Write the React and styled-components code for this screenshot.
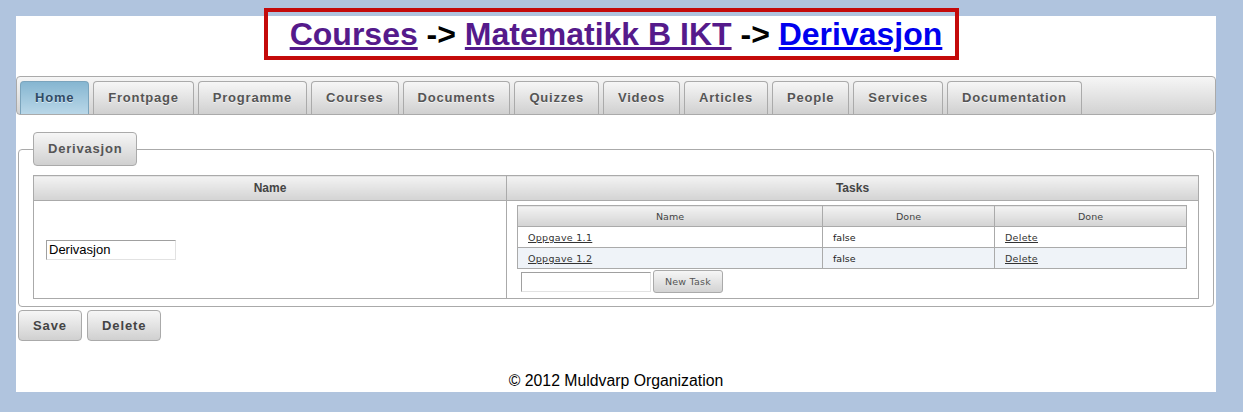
import React from 'react';
import styled, { createGlobalStyle } from 'styled-components';

const GlobalStyle = createGlobalStyle`
  html,
  body {
    background: #b0c4de;
    margin: 0;
    padding: 0;
  }

  body {
    font-family: "Liberation Sans", Arial, sans-serif;
    padding: 16px 16px 0;
  }
`;

const Page = styled.div`
  background: #fff;
  display: flex;
  flex-direction: column;
  height: 376px;
  width: 1200px;
`;

const HeaderWrap = styled.div`
  display: flex;
  justify-content: center;
  margin-top: -8px;
  padding-right: 9px;
`;

const Crumbs = styled.h1`
  border: 4px solid #c40a0a;
  font-size: 32px;
  font-weight: bold;
  line-height: 37px;
  margin: 0;
  padding: 4px 13px 3px 22px;
  white-space: nowrap;
`;

const Crumb = styled.a`
  color: ${({ $visited }) => ($visited ? '#551a8b' : '#0000ee')};
  text-decoration: underline;
`;

const Arrow = styled.span`
  color: #000;
`;

const Nav = styled.div`
  background: linear-gradient(#f6f6f6, #d2d2d2);
  border: 1px solid #aaa;
  border-radius: 4px;
  display: flex;
  gap: 4px;
  margin-top: 16px;
  padding: 4px 4px 0 3px;
`;

const Tab = styled.div`
  background: ${({ $active }) =>
    $active ? 'linear-gradient(#86b6d1, #b9d7e8)' : 'linear-gradient(#f6f6f6, #d0d0d0)'};
  border: 1px solid ${({ $active }) => ($active ? '#7ba4bc' : '#aaa')};
  border-bottom: none;
  border-radius: 4px 4px 0 0;
  color: ${({ $active }) => ($active ? '#2f4b66' : '#555')};
  font-size: 13px;
  font-weight: bold;
  height: 32px;
  letter-spacing: 0.78px;
  line-height: 32px;
  padding: 0 14px;
  text-shadow: 0 1px 0 rgba(255, 255, 255, 0.6);
`;

const Fieldset = styled.fieldset`
  border: 1px solid #aaa;
  border-radius: 4px;
  margin: 17px 2px 0;
  padding: 9px 14px 7px;
`;

const Legend = styled.legend`
  background: linear-gradient(#f6f6f6, #d0d0d0);
  border: 1px solid #aaa;
  border-radius: 4px;
  box-sizing: border-box;
  color: #555;
  font-size: 13px;
  font-weight: bold;
  height: 34px;
  letter-spacing: 0.8px;
  line-height: 32px;
  padding: 0 14px;
`;

const Table = styled.table`
  border-collapse: collapse;
  width: ${({ $width }) => $width}px;
`;

const HeadCell = styled.th`
  background: linear-gradient(#f3f3f3, #d3d3d3);
  border: 1px solid #aaa;
  color: #444;
  font-family: ${({ $small }) => ($small ? '"DejaVu Sans", Verdana, sans-serif' : 'inherit')};
  font-size: ${({ $small }) => ($small ? '9.5px' : '12px')};
  font-weight: ${({ $small }) => ($small ? 'normal' : 'bold')};
  height: ${({ $small }) => ($small ? 20 : 24)}px;
  padding: 0;
  width: ${({ $width }) => ($width ? `${$width}px` : 'auto')};
`;

const Cell = styled.td`
  border: 1px solid #aaa;
  padding: ${({ $pad }) => $pad};
  vertical-align: ${({ $top }) => ($top ? 'top' : 'middle')};
`;

const Row = styled.tr`
  background: ${({ $alt }) => ($alt ? '#eff3f8' : '#fff')};
`;

const SmallCell = styled.td`
  border: 1px solid #aaa;
  color: #222;
  font-family: "DejaVu Sans", Verdana, sans-serif;
  font-size: 9.5px;
  height: 20px;
  padding: 0 10px;
`;

const TaskLink = styled.a`
  color: #333;
  letter-spacing: 0.3px;
  text-decoration: underline;
`;

const TextInput = styled.input`
  border: 1px solid;
  border-color: #a0a0a0 #e2e2e2 #e2e2e2 #a0a0a0;
  box-sizing: border-box;
  font-family: "Liberation Sans", Arial, sans-serif;
  font-size: 13px;
  height: 20px;
  margin: 0;
  padding: 1px 2px;
  width: 130px;
`;

const TaskForm = styled.div`
  align-items: center;
  display: flex;
  gap: 2px;
  margin-top: 1px;
  padding-left: 4px;
`;

const SmallButton = styled.button`
  background: linear-gradient(#f6f6f6, #d3d3d3);
  border: 1px solid #aaa;
  border-radius: 3px;
  color: #555;
  font-family: "DejaVu Sans", Verdana, sans-serif;
  font-size: 9.5px;
  height: 23px;
  letter-spacing: 0.2px;
  padding: 0 11px;
`;

const Actions = styled.div`
  display: flex;
  gap: 5px;
  margin: 3px 2px 0;
`;

const Button = styled.button`
  background: linear-gradient(#f6f6f6, #d0d0d0);
  border: 1px solid #aaa;
  border-radius: 4px;
  color: #444;
  font-family: "Liberation Sans", Arial, sans-serif;
  font-size: 13px;
  font-weight: bold;
  height: 31px;
  letter-spacing: 0.9px;
  padding: 0 14px;
`;

const Footer = styled.div`
  font-size: 15.8px;
  line-height: 18px;
  margin-top: auto;
  padding-bottom: 2px;
  text-align: center;
`;

const tabs = [
  'Home',
  'Frontpage',
  'Programme',
  'Courses',
  'Documents',
  'Quizzes',
  'Videos',
  'Articles',
  'People',
  'Services',
  'Documentation',
];

const tasks = [
  { name: 'Oppgave 1.1', done: 'false' },
  { name: 'Oppgave 1.2', done: 'false' },
];

const App = () => (
  <>
    <GlobalStyle />
    <Page>
      <HeaderWrap>
        <Crumbs>
          <Crumb $visited href="#courses">Courses</Crumb>
          <Arrow> -&gt; </Arrow>
          <Crumb $visited href="#course">Matematikk B IKT</Crumb>
          <Arrow> -&gt; </Arrow>
          <Crumb href="#topic">Derivasjon</Crumb>
        </Crumbs>
      </HeaderWrap>

      <Nav>
        {tabs.map((tab) => (
          <Tab key={tab} $active={tab === 'Home'}>
            {tab}
          </Tab>
        ))}
      </Nav>

      <Fieldset>
        <Legend>Derivasjon</Legend>
        <Table $width={1166}>
          <thead>
            <tr>
              <HeadCell $width={473}>Name</HeadCell>
              <HeadCell>Tasks</HeadCell>
            </tr>
          </thead>
          <tbody>
            <tr>
              <Cell $pad="0 12px" style={{ height: 97 }}>
                <TextInput defaultValue="Derivasjon" />
              </Cell>
              <Cell $top $pad="4px 11px 5px 10px">
                <Table $width={670}>
                  <thead>
                    <tr>
                      <HeadCell $small $width={304}>Name</HeadCell>
                      <HeadCell $small $width={171}>Done</HeadCell>
                      <HeadCell $small>Done</HeadCell>
                    </tr>
                  </thead>
                  <tbody>
                    {tasks.map((task, i) => (
                      <Row key={task.name} $alt={i % 2 === 1}>
                        <SmallCell>
                          <TaskLink href="#task">{task.name}</TaskLink>
                        </SmallCell>
                        <SmallCell>{task.done}</SmallCell>
                        <SmallCell>
                          <TaskLink href="#delete">Delete</TaskLink>
                        </SmallCell>
                      </Row>
                    ))}
                  </tbody>
                </Table>
                <TaskForm>
                  <TextInput />
                  <SmallButton>New Task</SmallButton>
                </TaskForm>
              </Cell>
            </tr>
          </tbody>
        </Table>
      </Fieldset>

      <Actions>
        <Button>Save</Button>
        <Button>Delete</Button>
      </Actions>

      <Footer>© 2012 Muldvarp Organization</Footer>
    </Page>
  </>
);

export default App;
